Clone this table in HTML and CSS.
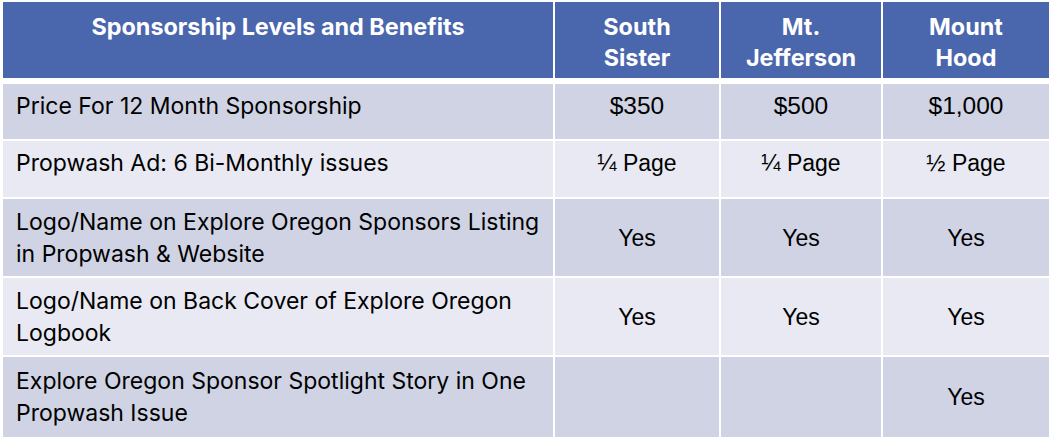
FILE: index.html
```html
<!DOCTYPE html>
<html lang="en">
<head>
<meta charset="utf-8">
<title>Sponsorship Levels and Benefits</title>
<link rel="stylesheet" href="styles.css">
</head>
<body>
<div class="sheet">
  <div class="grid">
    <div class="cell head">Sponsorship Levels and Benefits</div>
    <div class="cell head">South<br>Sister</div>
    <div class="cell head">Mt.<br>Jefferson</div>
    <div class="cell head">Mount<br>Hood</div>

    <div class="cell label odd single">Price For 12 Month Sponsorship</div>
    <div class="cell value price odd single">$350</div>
    <div class="cell value price odd single">$500</div>
    <div class="cell value price odd single">$1,000</div>

    <div class="cell label even single">Propwash Ad: 6 Bi-Monthly issues</div>
    <div class="cell value even single">¼ Page</div>
    <div class="cell value even single">¼ Page</div>
    <div class="cell value even single">½ Page</div>

    <div class="cell label odd">Logo/Name on Explore Oregon Sponsors Listing in Propwash &amp; Website</div>
    <div class="cell value odd">Yes</div>
    <div class="cell value odd">Yes</div>
    <div class="cell value odd">Yes</div>

    <div class="cell label even">Logo/Name on Back Cover of Explore Oregon Logbook</div>
    <div class="cell value even">Yes</div>
    <div class="cell value even">Yes</div>
    <div class="cell value even">Yes</div>

    <div class="cell label odd">Explore Oregon Sponsor Spotlight Story in One Propwash Issue</div>
    <div class="cell value odd"></div>
    <div class="cell value odd"></div>
    <div class="cell value odd">Yes</div>
  </div>
</div>
</body>
</html>
```

FILE: styles.css
```css
html, body {
  margin: 0;
  padding: 0;
  background: #ffffff;
}

.sheet {
  padding: 2px 3px 0 3px;
  width: 1046px;
  height: 436px;
  overflow: hidden;
}

.grid {
  display: grid;
  grid-template-columns: 550px 164px 160px 166px;
  grid-template-rows: 80px 55px 56px 77px 77px 80px;
  column-gap: 2px;
  row-gap: 2px;
  background: #ffffff;
}

.cell {
  box-sizing: border-box;
  color: #000000;
}

.head {
  background: #4a66ac;
  color: #ffffff;
  font-family: Inter, "Liberation Sans", sans-serif;
  font-weight: 700;
  font-size: 23.4px;
  line-height: 31px;
  text-align: center;
  padding-top: 9px;
  margin-bottom: 4px;
}

.odd { background: #cfd3e4; }
.even { background: #e8e9f2; }

.label {
  font-family: Inter, "Liberation Sans", sans-serif;
  font-size: 23px;
  line-height: 32px;
  padding: 0 12px 0 13px;
  display: flex;
  align-items: center;
}

.value {
  font-family: "Liberation Sans", Arial, sans-serif;
  font-size: 23px;
  line-height: 32px;
  display: flex;
  align-items: center;
  justify-content: center;
}

.price { font-size: 24.5px; }

.single {
  padding-bottom: 12px;
}
```
